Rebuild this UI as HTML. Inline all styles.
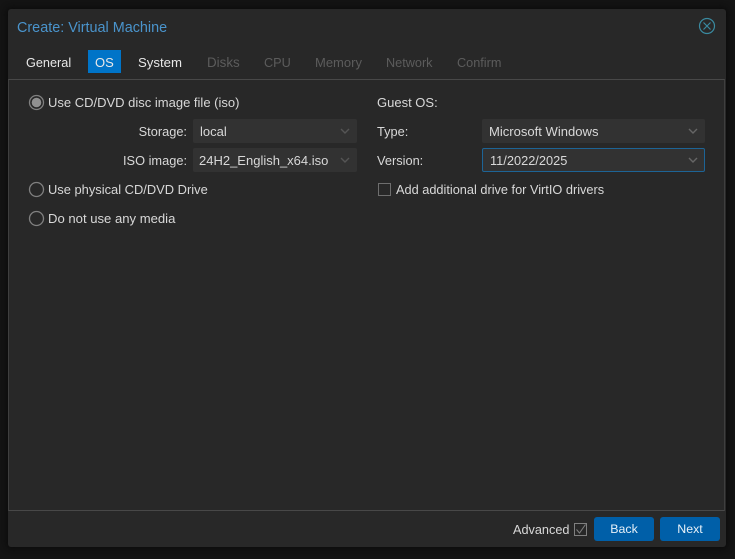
<!DOCTYPE html>
<html>
<head>
<meta charset="utf-8">
<style>
html,body{margin:0;padding:0;background:#141414;}
body{width:735px;height:559px;position:relative;overflow:hidden;font-family:"Liberation Sans",sans-serif;font-size:13px;color:#d8d8d8;}
.win{position:absolute;left:8px;top:9px;width:718px;height:538px;background:#282828;border-radius:3px;box-shadow:0 0 6px 2px #0c0c0c;}
.t{position:absolute;white-space:nowrap;line-height:18px;}
.tab{font-size:12.7px;}
.panel{position:absolute;left:8px;top:79px;width:717px;height:432px;box-sizing:border-box;border:1px solid #3f3f3f;border-top-color:#484848;border-bottom-color:#484848;}
.dis{color:#5c5c5c;}
.sel{position:absolute;height:24px;background:#323232;border-radius:2px;box-sizing:border-box;}
.sel svg{position:absolute;right:6px;top:8px;}
.btn{position:absolute;top:517px;height:24px;width:60px;background:#005fa8;border-radius:3px;color:#e6f0f8;text-align:center;line-height:25px;font-size:12.4px;}
</style>
</head>
<body>
<div class="win"></div>
<div class="panel"></div>

<div class="t" style="left:17px;top:19px;font-size:14.4px;color:#4a94cc;">Create: Virtual Machine</div>
<svg style="position:absolute;left:698px;top:17px" width="18" height="18" viewBox="0 0 18 18" fill="none" stroke="#3a8aa0" stroke-width="1.2"><circle cx="9" cy="9" r="7.5"/><path d="M5.5 5.5L12.5 12.5M12.5 5.5L5.5 12.5"/></svg>

<div class="t tab" style="left:26px;top:54px;color:#e8e8e8;">General</div>
<div style="position:absolute;left:88px;top:50px;width:33px;height:23px;background:#0074c8;"></div>
<div class="t tab" style="left:95px;top:54px;color:#e8e8e8;font-size:13px;">OS</div>
<div class="t tab" style="left:138px;top:54px;color:#e8e8e8;font-size:13.2px;">System</div>
<div class="t tab dis" style="left:207px;top:54px;font-size:13.4px;">Disks</div>
<div class="t tab dis" style="left:264px;top:54px;">CPU</div>
<div class="t tab dis" style="left:315px;top:54px;font-size:13px;">Memory</div>
<div class="t tab dis" style="left:386px;top:54px;">Network</div>
<div class="t tab dis" style="left:457px;top:54px;">Confirm</div>

<svg style="position:absolute;left:28px;top:94px" width="17" height="17" viewBox="0 0 17 17"><circle cx="8.5" cy="8.5" r="7" fill="none" stroke="#808080" stroke-width="1.3"/><circle cx="8.5" cy="8.5" r="4.8" fill="#909090"/></svg>
<div class="t" style="left:48px;top:94px;">Use CD/DVD disc image file (iso)</div>

<div class="t" style="right:548px;top:123px;font-size:12.8px;">Storage:</div>
<div class="sel" style="left:193px;top:119px;width:164px;"><svg width="12" height="8" viewBox="0 0 12 8" fill="none" stroke="#555" stroke-width="1.4"><path d="M2 2L6 6L10 2"/></svg></div>
<div class="t" style="left:200px;top:123px;">local</div>

<div class="t" style="right:548px;top:152px;font-size:12.8px;">ISO image:</div>
<div class="sel" style="left:193px;top:148px;width:164px;"><svg width="12" height="8" viewBox="0 0 12 8" fill="none" stroke="#555" stroke-width="1.4"><path d="M2 2L6 6L10 2"/></svg></div>
<div class="t" style="left:199px;top:152px;">24H2_English_x64.iso</div>

<svg style="position:absolute;left:28px;top:181px" width="17" height="17" viewBox="0 0 17 17"><circle cx="8.5" cy="8.5" r="7" fill="none" stroke="#808080" stroke-width="1.3"/></svg>
<div class="t" style="left:48px;top:181px;font-size:12.9px;">Use physical CD/DVD Drive</div>
<svg style="position:absolute;left:28px;top:210px" width="17" height="17" viewBox="0 0 17 17"><circle cx="8.5" cy="8.5" r="7" fill="none" stroke="#808080" stroke-width="1.3"/></svg>
<div class="t" style="left:48px;top:210px;font-size:13.1px;">Do not use any media</div>

<div class="t" style="left:377px;top:94px;">Guest OS:</div>
<div class="t" style="left:377px;top:123px;font-size:12.8px;">Type:</div>
<div class="sel" style="left:482px;top:119px;width:223px;"><svg width="12" height="8" viewBox="0 0 12 8" fill="none" stroke="#666" stroke-width="1.4"><path d="M2 2L6 6L10 2"/></svg></div>
<div class="t" style="left:489px;top:123px;font-size:13.05px;">Microsoft Windows</div>
<div class="t" style="left:377px;top:152px;font-size:12.8px;">Version:</div>
<div class="sel" style="left:482px;top:148px;width:223px;border:1px solid #1d6496;"><svg style="right:5px;top:7px" width="12" height="8" viewBox="0 0 12 8" fill="none" stroke="#666" stroke-width="1.4"><path d="M2 2L6 6L10 2"/></svg></div>
<div class="t" style="left:490px;top:152px;font-size:12.8px;">11/2022/2025</div>

<div style="position:absolute;left:378px;top:183px;width:13px;height:13px;box-sizing:border-box;border:1px solid #6e6e6e;"></div>
<div class="t" style="left:396px;top:181px;font-size:12.75px;">Add additional drive for VirtIO drivers</div>

<div class="t tab" style="left:513px;top:521px;">Advanced</div>
<svg style="position:absolute;left:574px;top:523px" width="13" height="13" viewBox="0 0 13 13" fill="none" stroke="#808080" stroke-width="1"><rect x="0.5" y="0.5" width="12" height="12"/><path d="M2.5 6.5L5.5 10L11.5 1.5"/></svg>
<div class="btn" style="left:594px;">Back</div>
<div class="btn" style="left:660px;">Next</div>
</body>
</html>
